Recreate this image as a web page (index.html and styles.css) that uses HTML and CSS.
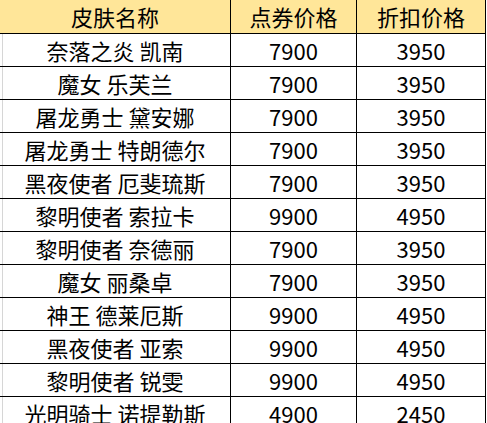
FILE: index.html
```html
<!DOCTYPE html>
<html lang="zh-CN">
<head>
<meta charset="utf-8">
<title>皮肤价格</title>
<link rel="stylesheet" href="styles.css">
</head>
<body>
<div class="sheet">
  <div class="row head">
    <div class="cell c1">皮肤名称</div>
    <div class="cell c2">点券价格</div>
    <div class="cell c3">折扣价格</div>
  </div>
  <div class="row"><div class="cell c1">奈落之炎 凯南</div><div class="cell c2">7900</div><div class="cell c3">3950</div></div>
  <div class="row"><div class="cell c1">魔女 乐芙兰</div><div class="cell c2">7900</div><div class="cell c3">3950</div></div>
  <div class="row"><div class="cell c1">屠龙勇士 黛安娜</div><div class="cell c2">7900</div><div class="cell c3">3950</div></div>
  <div class="row"><div class="cell c1">屠龙勇士 特朗德尔</div><div class="cell c2">7900</div><div class="cell c3">3950</div></div>
  <div class="row"><div class="cell c1">黑夜使者 厄斐琉斯</div><div class="cell c2">7900</div><div class="cell c3">3950</div></div>
  <div class="row"><div class="cell c1">黎明使者 索拉卡</div><div class="cell c2">9900</div><div class="cell c3">4950</div></div>
  <div class="row"><div class="cell c1">黎明使者 奈德丽</div><div class="cell c2">7900</div><div class="cell c3">3950</div></div>
  <div class="row"><div class="cell c1">魔女 丽桑卓</div><div class="cell c2">7900</div><div class="cell c3">3950</div></div>
  <div class="row"><div class="cell c1">神王 德莱厄斯</div><div class="cell c2">9900</div><div class="cell c3">4950</div></div>
  <div class="row"><div class="cell c1">黑夜使者 亚索</div><div class="cell c2">9900</div><div class="cell c3">4950</div></div>
  <div class="row"><div class="cell c1">黎明使者 锐雯</div><div class="cell c2">9900</div><div class="cell c3">4950</div></div>
  <div class="row"><div class="cell c1">光明骑士 诺提勒斯</div><div class="cell c2">4900</div><div class="cell c3">2450</div></div>
</div>
</body>
</html>
```

FILE: styles.css
```css
html, body {
  margin: 0;
  padding: 0;
  background: #ffffff;
  overflow: hidden;
}

.sheet {
  width: 486px;
  font-family: "Noto Sans CJK SC", "Noto Sans", sans-serif;
  font-size: 22px;
  color: #000000;
}

.row {
  display: grid;
  grid-template-columns: 231px 126px 129px;
  height: 33px;
}

.row.head {
  height: 34px;
  background: #ffe699;
}

.cell {
  box-sizing: border-box;
  display: flex;
  align-items: center;
  justify-content: center;
  border-right: 1px solid #000000;
  border-bottom: 1px solid #000000;
  line-height: 1;
  white-space: nowrap;
  padding-bottom: 1px;
}

.row:not(.head) .c1 {
  background: linear-gradient(to right, #ffffff 2px, #d6d6d6 2px, #d6d6d6 3px, #ffffff 3px);
}
```
